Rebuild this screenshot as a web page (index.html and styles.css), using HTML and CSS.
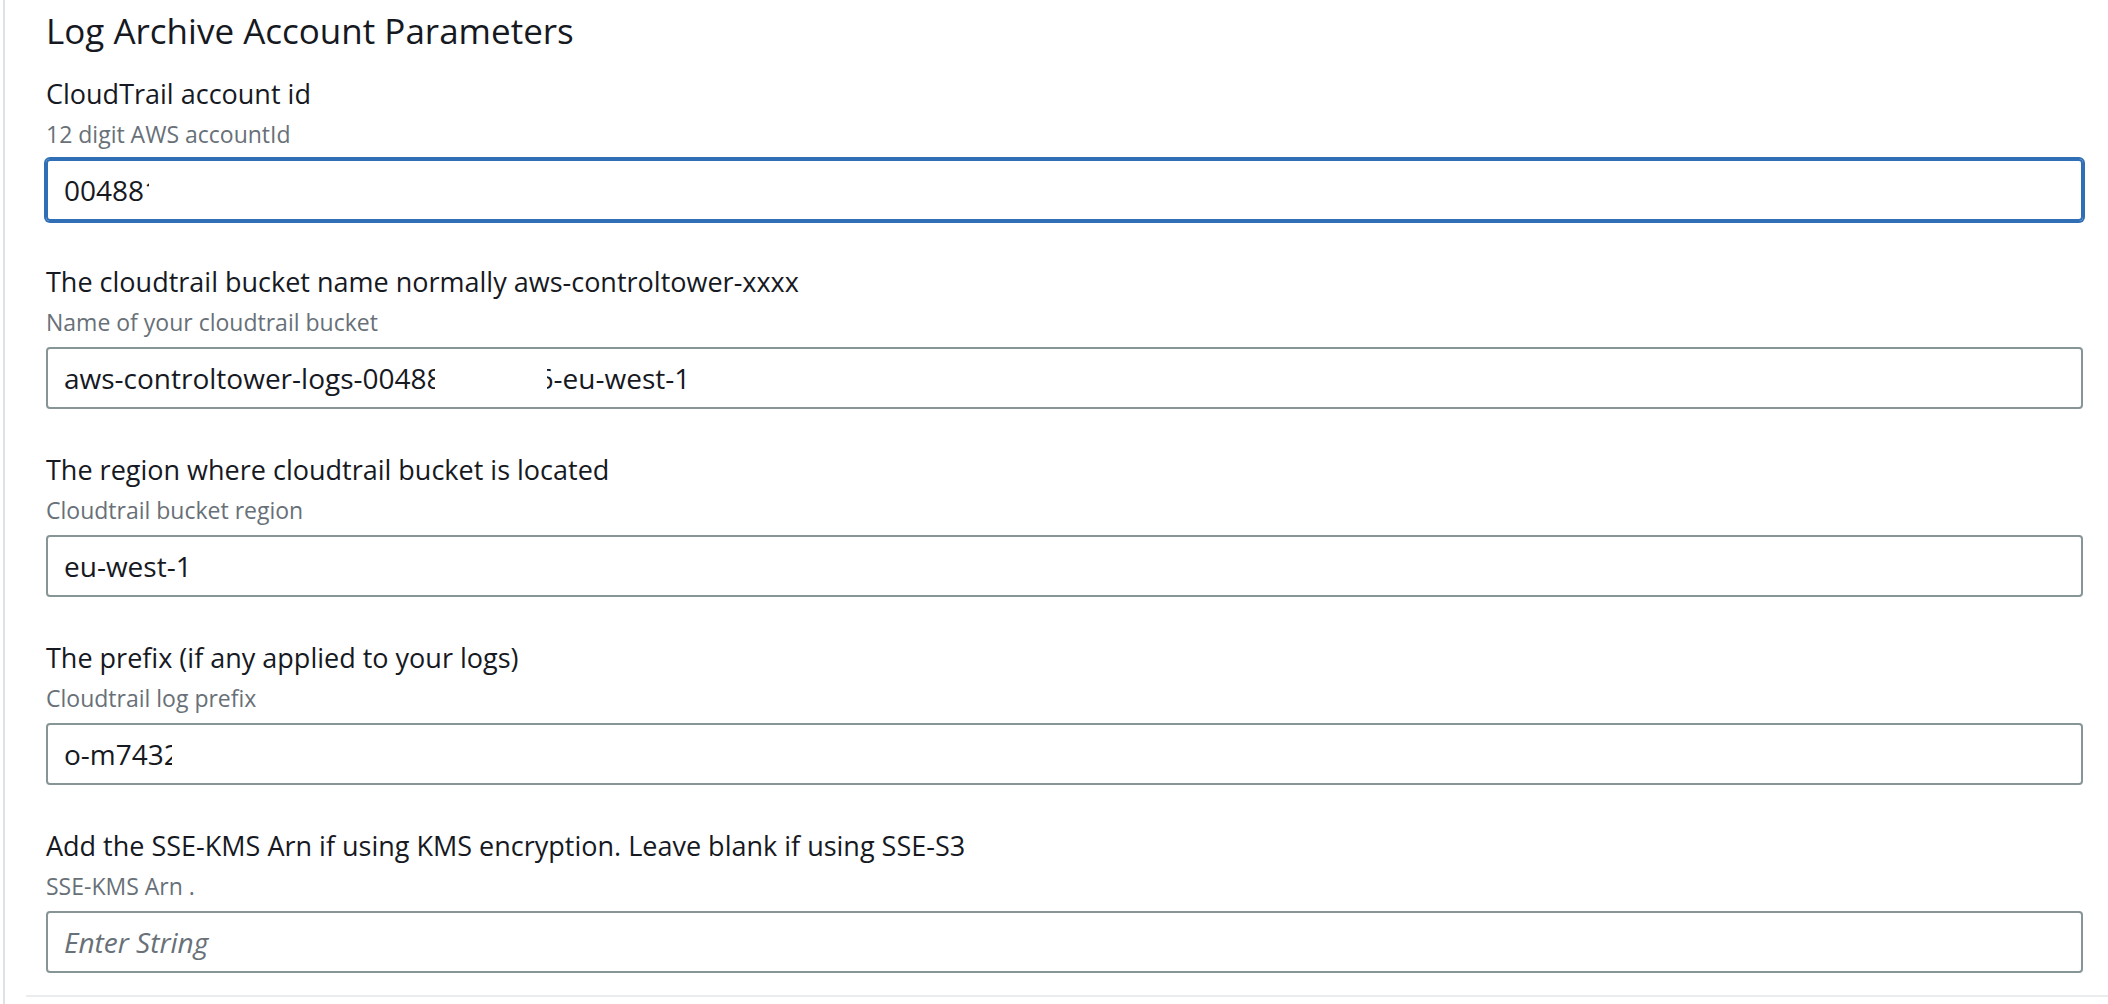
FILE: index.html
```html
<!DOCTYPE html>
<html lang="en">
<head>
<meta charset="utf-8">
<title>Log Archive Account Parameters</title>
<link rel="stylesheet" href="styles.css">
</head>
<body>
<div class="page">
  <div class="section">
    <div class="content">
      <h2 class="title">Log Archive Account Parameters</h2>
      <div class="field">
        <div class="label">CloudTrail account id</div>
        <div class="hint">12 digit AWS accountId</div>
        <div class="input focused"><span class="value">00488</span><span class="cut cut-flag">1</span></div>
      </div>
      <div class="field">
        <div class="label">The cloudtrail bucket name normally aws-controltower-xxxx</div>
        <div class="hint">Name of your cloudtrail bucket</div>
        <div class="input"><span class="value">aws-controltower-logs-0048</span><span class="cut cut-half">8</span><span class="hidden"></span><span class="cut cut-tail"><span class="tail-inner">6</span></span><span class="value">-eu-west-1</span></div>
      </div>
      <div class="field">
        <div class="label">The region where cloudtrail bucket is located</div>
        <div class="hint">Cloudtrail bucket region</div>
        <div class="input"><span class="value">eu-west-1</span></div>
      </div>
      <div class="field">
        <div class="label">The prefix (if any applied to your logs)</div>
        <div class="hint">Cloudtrail log prefix</div>
        <div class="input"><span class="value">o-m743</span><span class="cut cut-half">2</span></div>
      </div>
      <div class="field">
        <div class="label">Add the SSE-KMS Arn if using KMS encryption. Leave blank if using SSE-S3</div>
        <div class="hint">SSE-KMS Arn .</div>
        <div class="input"><span class="placeholder">Enter String</span></div>
      </div>
    </div>
    <div class="divider"></div>
  </div>
</div>
</body>
</html>
```
FILE: styles.css
```css
html, body {
  margin: 0;
  padding: 0;
  background: #ffffff;
}
body {
  font-family: "Open Sans", "Noto Sans", sans-serif;
  color: #16191f;
}
.page {
  margin-left: 3px;
  border-left: 2px solid #dfe2e5;
  min-height: 1004px;
  box-sizing: border-box;
}
.section {
  padding-left: 21px;
}
.content {
  padding: 0 25px 0 20px;
}
.title {
  margin: 0;
  font-weight: 400;
  font-size: 35px;
  line-height: 44px;
  padding-top: 9px;
}
.field {
  display: flex;
  flex-direction: column;
}
.label {
  font-size: 27px;
  line-height: 36px;
  margin-top: 23px;
}
.hint {
  font-size: 23px;
  line-height: 32px;
  color: #687078;
  margin-top: 6px;
  margin-bottom: 9px;
}
.field + .field .label {
  margin-top: 43px;
}
.input {
  height: 62px;
  box-sizing: border-box;
  border: 2px solid #879596;
  border-radius: 4px;
  display: flex;
  align-items: center;
  padding-left: 16px;
  font-size: 28px;
}
.input.focused {
  border-color: #306fb6;
  box-shadow: 0 0 0 2px #306fb6;
}
.value {
  white-space: pre;
}
.cut {
  display: inline-block;
  overflow: hidden;
  white-space: pre;
}
.cut-flag {
  width: 5px;
  height: 13px;
  align-self: flex-start;
  margin-top: 15px;
  line-height: 1;
}
.cut-half {
  width: 8px;
}
.hidden {
  width: 112px;
}
.cut-tail {
  width: 7px;
  direction: rtl;
}
.tail-inner {
  display: inline-block;
  direction: ltr;
}
.placeholder {
  font-style: italic;
  color: #687078;
}
.divider {
  margin-top: 22px;
  height: 2px;
  background: #eaeded;
}
```
